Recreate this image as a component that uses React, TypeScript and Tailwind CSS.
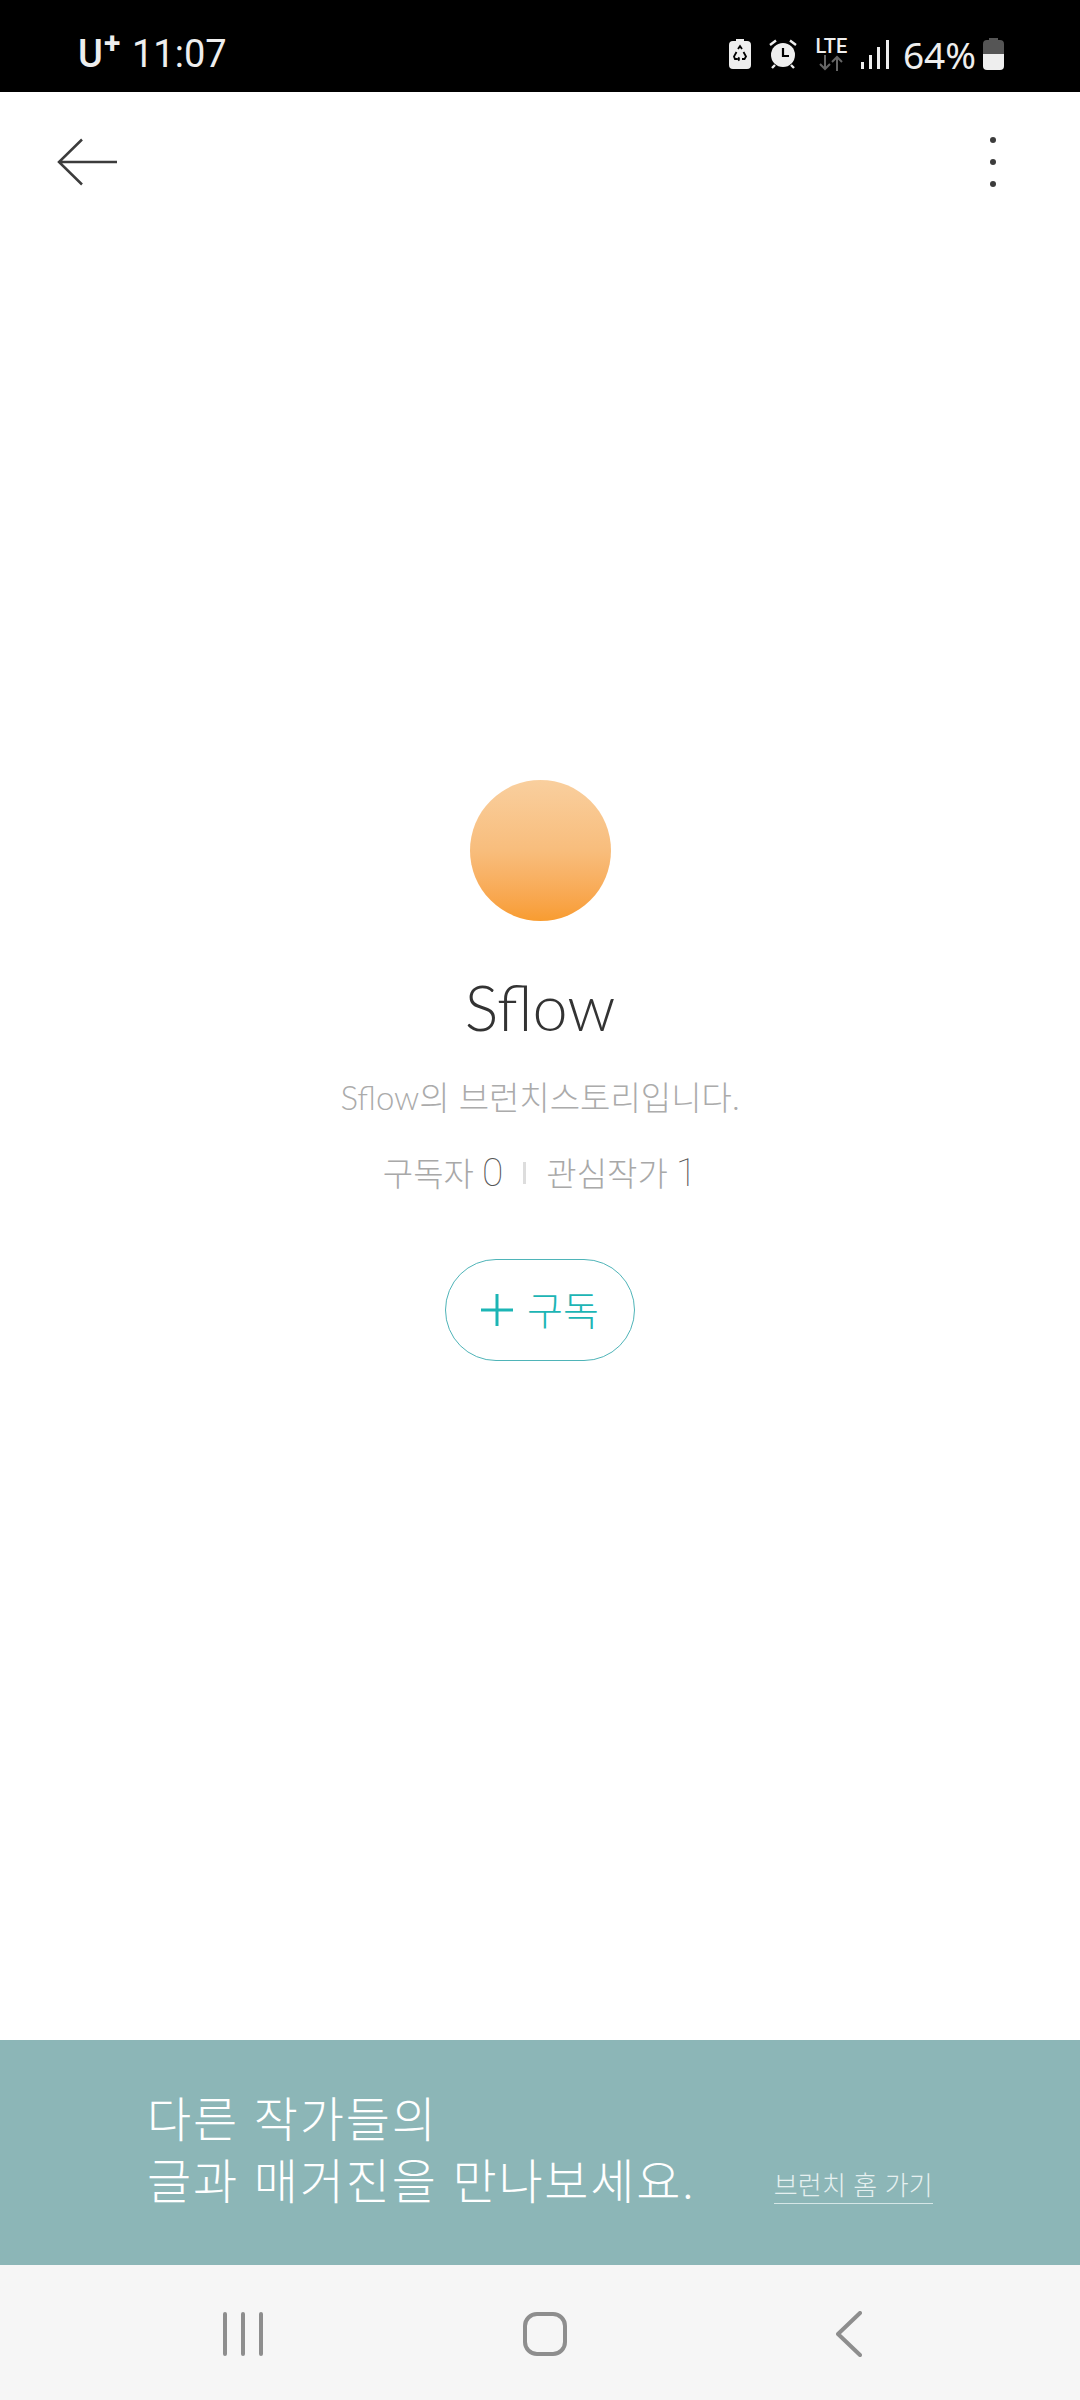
const sans = "font-['Lato','Noto_Sans_CJK_KR',sans-serif]";

function StatusBar() {
  return (
    <div className="flex h-[92px] items-center justify-between bg-black pt-[16px] pl-[78px] pr-[76px] text-[#eeeeee]">
      <div className="flex items-center font-['Roboto',sans-serif]">
        <span className="relative w-[42px] text-[38px] leading-none font-medium">
          U<span className="absolute left-[26px] top-[-7px] text-[30px] font-bold">+</span>
        </span>
        <span className="ml-[12px] text-[38px] leading-none">11:07</span>
      </div>
      <div className="flex items-center">
        <svg width="22" height="30" viewBox="0 0 22 30">
          <path d="M7 0h8v2h3a4 4 0 0 1 4 4v20a4 4 0 0 1-4 4H4a4 4 0 0 1-4-4V6a4 4 0 0 1 4-4h3z" fill="#eeeeee" />
          <path d="M9 10l2-3 2 3M14.500 13l2.500 4.500-1.500 2.500H13M8.500 20H6l-1-2.500L7.500 13M9 20l1.500-1.500M9 20l1.500 1.500" fill="none" stroke="#000" strokeWidth="1.800" />
        </svg>
        <svg className="ml-[17px]" width="30" height="30" viewBox="0 0 30 30">
          <circle cx="15" cy="16" r="12" fill="#eeeeee" />
          <path d="M15 9v8h6" fill="none" stroke="#000" strokeWidth="2.200" />
          <path d="M2 6l6-4.500M28 6l-6-4.500M4 29l3-3M26 29l-3-3" stroke="#eeeeee" strokeWidth="2.400" />
        </svg>
        <div className="ml-[17px] flex w-[33px] flex-col items-center">
          <span className="font-['Roboto',sans-serif] text-[20px] leading-[17px] font-medium">LTE</span>
          <svg width="24" height="16" viewBox="0 0 24 16" fill="none" stroke="#666666" strokeWidth="2">
            <path d="M6 0v14M1 9l5 5 5-5M18 16V2M13 7l5-5 5 5" />
          </svg>
        </div>
        <svg className="ml-[13px]" width="28" height="30" viewBox="0 0 28 30" fill="#eeeeee">
          <rect x="0" y="23" width="3" height="7" />
          <rect x="8" y="16" width="3" height="14" />
          <rect x="16" y="8" width="3" height="22" />
          <rect x="25" y="1" width="3" height="29" />
        </svg>
        <span className="ml-[14px] font-['Noto_Sans',sans-serif] text-[37px] leading-none">64%</span>
        <svg className="ml-[7px]" width="21" height="32" viewBox="0 0 21 32">
          <path d="M6 0h9v2h2a4 4 0 0 1 4 4v10H0V6a4 4 0 0 1 4-4h2z" fill="#555555" />
          <path d="M0 16h21v12a4 4 0 0 1-4 4H4a4 4 0 0 1-4-4z" fill="#eeeeee" />
        </svg>
      </div>
    </div>
  );
}

function Header() {
  return (
    <div className="flex h-[140px] items-center justify-between pl-[57px] pr-[84px]">
      <svg width="60" height="48" viewBox="0 0 60 48" fill="none" stroke="#3c3c3c" strokeWidth="2.500">
        <path d="M60 24H2M25 1.500L2 24l23 22.500" />
      </svg>
      <div className="flex flex-col gap-[16px]">
        <div className="h-[6px] w-[6px] rounded-full bg-[#3c3c3c]" />
        <div className="h-[6px] w-[6px] rounded-full bg-[#3c3c3c]" />
        <div className="h-[6px] w-[6px] rounded-full bg-[#3c3c3c]" />
      </div>
    </div>
  );
}

function Profile() {
  return (
    <div className="flex flex-1 flex-col items-center pt-[548px]">
      <div className="h-[141px] w-[141px] rounded-full bg-gradient-to-b from-[#f9cf9e] via-[#f8bd7c] to-[#f89c30]" />
      <h1 className="mt-[46px] text-[63px] leading-[80px] font-light text-[#333333]">Sflow</h1>
      <p className="mt-[26px] text-[33px] leading-[48px] font-light text-[#ababab]">Sflow의 브런치스토리입니다.</p>
      <div className="mt-[28px] flex items-center text-[33px] leading-[48px] font-light text-[#a8a8a8]">
        <span>구독자</span>
        <span className="ml-[8px] font-['Roboto',sans-serif] text-[39px] font-thin text-[#555555]">0</span>
        <span className="mx-[20px] h-[22px] w-[3px] bg-[#dddddd]" />
        <span>관심작가</span>
        <span className="ml-[8px] font-['Roboto',sans-serif] text-[39px] font-thin text-[#555555]">1</span>
      </div>
      <button className="mt-[62px] flex h-[102px] w-[190px] items-center justify-center gap-[14px] rounded-full border border-[#4fb4b8] text-[39px] font-light text-[#1cb5b5]">
        <svg width="32" height="32" viewBox="0 0 32 32" stroke="#1cb5b5" strokeWidth="3">
          <path d="M0 16h32M16 0v32" />
        </svg>
        구독
      </button>
    </div>
  );
}

function Banner() {
  return (
    <div className="flex h-[225px] items-end bg-[#8cb6b7] pb-[53px] pl-[147px] pr-[147px] text-white">
      <p className="text-[48px] leading-[62px] font-light tracking-[1.800px]">
        다른 작가들의
        <br />
        글과 매거진을 만나보세요.
      </p>
      <a className="mb-[8px] ml-auto border-b border-[#d5e6e6] text-[26px] leading-[35px] font-light tracking-[0.200px] text-[#e6f0f0]">브런치 홈 가기</a>
    </div>
  );
}

function NavBar() {
  return (
    <div className="flex h-[135px] items-center justify-between bg-[#f6f6f6] pt-[3px] pl-[223px] pr-[218px]">
      <svg width="40" height="44" viewBox="0 0 40 44" stroke="#8e8e8e" strokeWidth="4" strokeLinecap="round">
        <path d="M2 2v40M20 2v40M38 2v40" />
      </svg>
      <svg className="mr-[10px]" width="44" height="44" viewBox="0 0 44 44" fill="none" stroke="#8e8e8e" strokeWidth="4">
        <rect x="2" y="2" width="40" height="40" rx="12" />
      </svg>
      <svg width="26" height="46" viewBox="0 0 26 46" fill="none" stroke="#8e8e8e" strokeWidth="4" strokeLinecap="round" strokeLinejoin="round">
        <path d="M24 2L2 23l22 21" />
      </svg>
    </div>
  );
}

export default function App() {
  return (
    <div className={`flex h-[2400px] w-[1080px] flex-col bg-white ${sans}`}>
      <StatusBar />
      <Header />
      <Profile />
      <Banner />
      <NavBar />
    </div>
  );
}
